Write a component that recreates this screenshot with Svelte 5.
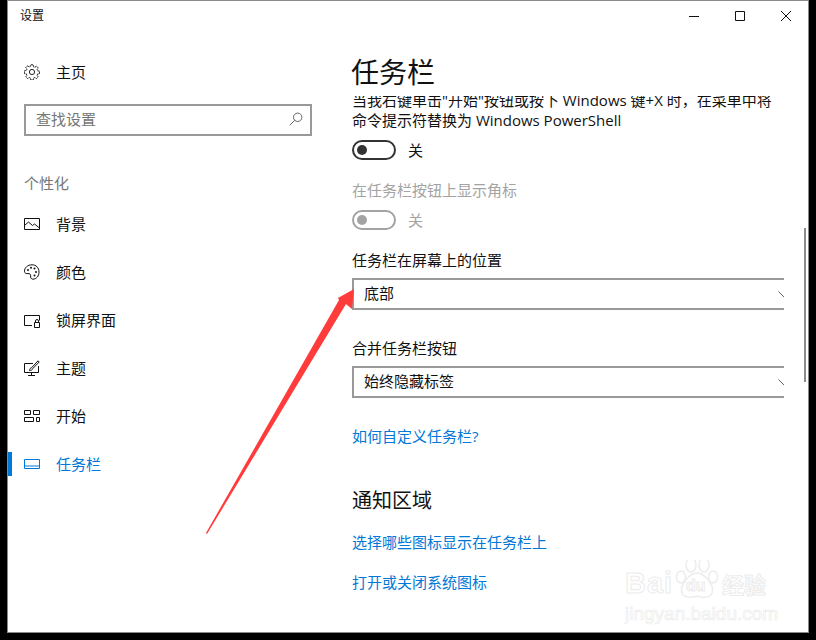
<script>
  const nav = [
    { label: '背景', icon: 'bg' },
    { label: '颜色', icon: 'color' },
    { label: '锁屏界面', icon: 'lock' },
    { label: '主题', icon: 'theme' },
    { label: '开始', icon: 'start' },
    { label: '任务栏', icon: 'bar', active: true }
  ];
</script>

{#snippet chevron()}
  <svg class="chev" width="12" height="7" viewBox="0 0 12 7"><path d="M.5.5 6 6l5.500-5.500" fill="none" stroke="#666" stroke-width="1"/></svg>
{/snippet}

<div class="window">
  <aside class="side">
    <div class="apptitle">设置</div>
    <div class="row home">
      <svg class="ico" width="16" height="16" viewBox="0 0 16 16" fill="none" stroke="#222" stroke-width="1">
        <circle cx="8" cy="8" r="2.600"/>
        <path d="M6.800.8h2.400l.4 2 1.200.5 1.700-1.100 1.700 1.700-1.100 1.700.5 1.200 2 .4v2.400l-2 .4-.5 1.200 1.100 1.700-1.700 1.700-1.700-1.100-1.200.5-.4 2H6.800l-.4-2-1.200-.5-1.700 1.100-1.700-1.700 1.100-1.700-.5-1.200-2-.4V6.800l2-.4.5-1.200-1.100-1.700 1.700-1.700 1.700 1.100 1.200-.5z" stroke-dasharray="2.200 .5"/>
      </svg>
      <span>主页</span>
    </div>
    <div class="search">
      <span>查找设置</span>
      <svg width="14" height="14" viewBox="0 0 14 14" fill="none" stroke="#666" stroke-width="1"><circle cx="8.700" cy="5.300" r="4.200"/><path d="M5.700 8.300.7 13.300"/></svg>
    </div>
    <div class="group">个性化</div>
    <nav>
      {#each nav as item}
        <div class="row item" class:active={item.active}>
          <svg class="ico" width="16" height="16" viewBox="0 0 16 16" fill="none" stroke="currentColor" stroke-width="1">
            {#if item.icon === 'bg'}
              <path d="M.5 2.500h15v11H.5z"/><path d="M.5 9.500 4.500 6l4 3.500 2-1.500 5 4"/>
            {:else if item.icon === 'color'}
              <path d="M8 .8C3.500.8.5 3.800.5 7.200c0 2.200 1.800 2.600 3.500 2.400 1.800-.2 2.800.6 2.600 2.200-.2 1.800.6 3.400 2.200 3.400 3.600 0 6.200-3.200 6.200-7C15 3.600 12 .8 8 .8z"/>
              <g fill="currentColor" stroke="none"><circle cx="4" cy="6" r="1"/><circle cx="7" cy="3.800" r="1"/><circle cx="10.500" cy="4.500" r="1"/><circle cx="12" cy="8" r="1"/><circle cx="10.500" cy="11.500" r="1"/></g>
            {:else if item.icon === 'lock'}
              <path d="M8 13.500H.5v-10h15v5"/><path d="M10.500 10.500h5v5h-5z"/><path d="M11.500 10.500V9a1.500 1.500 0 0 1 3 0v1.500"/>
            {:else if item.icon === 'theme'}
              <path d="M9 3.500H.5v9h14V6"/><path d="M7.500 12.500v2.500M4 15.500h7"/><path d="M5.500 10.500c.2-1.800 1-2.600 2.200-2.800L14 .8l1.200 1.200-6.500 6.700c-.3 1.200-1.500 1.800-3.200 1.800z" fill="#fff"/>
            {:else if item.icon === 'start'}
              <path d="M.5 2.500h6v4h-6zM9.500 2.500h6v4h-6zM.5 9.500h9v4h-9zM12.500 9.500h3v4h-3z"/>
            {:else}
              <path d="M.5 3.500h15v9H.5zM.5 10h15"/>
            {/if}
          </svg>
          <span>{item.label}</span>
        </div>
      {/each}
    </nav>
  </aside>

  <main class="main">
    <div class="controls">
      <svg width="10" height="10" viewBox="0 0 10 10"><path d="M0 5.500h10" stroke="#111"/></svg>
      <svg width="10" height="10" viewBox="0 0 10 10"><path d="M.5.500h9v9h-9z" fill="none" stroke="#111"/></svg>
      <svg width="10" height="10" viewBox="0 0 10 10"><path d="m0 0 10 10M10 0 0 10" stroke="#111"/></svg>
    </div>
    <h1>任务栏</h1>
    <div class="scroll">
      <div class="content">
        <p class="first">当我右键单击"开始"按钮或按下 Windows 键+X 时，在菜单中将<br/>命令提示符替换为 Windows PowerShell</p>
        <div class="toggle-row"><span class="toggle"><i></i></span><span>关</span></div>
        <p class="label dim">在任务栏按钮上显示角标</p>
        <div class="toggle-row off dim"><span class="toggle"><i></i></span><span>关</span></div>
        <p class="label">任务栏在屏幕上的位置</p>
        <div class="select"><span>底部</span>{@render chevron()}</div>
        <p class="label wide">合并任务栏按钮</p>
        <div class="select"><span>始终隐藏标签</span>{@render chevron()}</div>
        <p class="link wide">如何自定义任务栏?</p>
        <h2>通知区域</h2>
        <p class="link l1">选择哪些图标显示在任务栏上</p>
        <p class="link l2">打开或关闭系统图标</p>
      </div>
    </div>
    <div class="thumb"></div>
  </main>
</div>

<svg class="arrow" width="816" height="640" viewBox="0 0 816 640">
  <path d="M354 289 352 309 346 304 207 534 206 533 339 300 338 298z" fill="#ff3b3b"/>
</svg>

<div class="mark">
  <div class="mark-top">
    <span class="bai">Bai</span>
    <span class="paw">
      <svg width="44" height="40" viewBox="0 0 44 40" fill="#fff" stroke="#ececec" stroke-width="1.500">
        <ellipse cx="6" cy="17" rx="4.500" ry="6"/><ellipse cx="16" cy="5" rx="5" ry="7"/><ellipse cx="29" cy="5" rx="5" ry="7"/><ellipse cx="38" cy="17" rx="4.500" ry="6"/>
        <path d="M22 13c7 0 18 12 15 20-2 5-9 5-15 3-6 2-13 2-15-3-3-8 8-20 15-20z"/>
      </svg>
      <span class="du">du</span>
    </span>
    <span class="jy">经验</span>
  </div>
  <div class="mark-url">jingyan.baidu.com</div>
</div>

<style>
  :global(body) {
    margin: 0;
    background: #000;
  }
  :global(#app) {
    height: 640px;
    overflow: hidden;
    position: relative;
  }
  .window {
    box-sizing: border-box;
    width: 802px;
    height: 633px;
    margin-left: 7px;
    background: #fff;
    border: 1px solid #8a8a8a;
    display: flex;
    color: #111;
    font: 15px/20px "Open Sans", "Noto Sans CJK SC", sans-serif;
  }
  .side {
    width: 344px;
    flex: none;
    display: flex;
    flex-direction: column;
    padding-left: 16px;
    box-sizing: border-box;
  }
  .apptitle {
    font-size: 12px;
    line-height: 16px;
    margin: 7px 0 0 -4px;
  }
  .row {
    display: flex;
    align-items: center;
    gap: 16px;
    height: 48px;
  }
  .ico { flex: none; }
  .home { margin-top: 24px; }
  .search {
    box-sizing: border-box;
    width: 288px;
    height: 32px;
    margin-top: 8px;
    border: 2px solid #999;
    display: flex;
    align-items: center;
    justify-content: space-between;
    padding: 0 7px 2px 10px;
    color: #767676;
  }
  .group {
    margin-top: 37px;
    color: #767676;
  }
  nav { margin-top: 7px; margin-left: -16px; }
  .item { padding-left: 16px; position: relative; }
  .active { color: #0078d7; }
  .active::before {
    content: "";
    position: absolute;
    left: 0;
    top: 12px;
    width: 4px;
    height: 24px;
    background: #0078d7;
  }
  .main {
    flex: 1;
    min-width: 0;
    position: relative;
    display: flex;
    flex-direction: column;
  }
  .controls {
    position: absolute;
    top: 10px;
    right: 17px;
    display: flex;
    gap: 36px;
  }
  .controls svg { display: block; }
  h1 {
    margin: 50px 0 0 -1px;
    font-size: 28px;
    line-height: 43px;
    font-weight: 400;
    height: 45px;
    flex: none;
  }
  .scroll {
    width: 432px;
    flex: 1;
    min-height: 0;
    overflow: hidden;
  }
  .content { width: 460px; }
  p { margin: 0; }
  .first { margin-top: -6px; width: 432px; }
  .toggle-row {
    display: flex;
    align-items: center;
    gap: 12px;
    height: 20px;
    margin-top: 10px;
  }
  .toggle {
    box-sizing: border-box;
    width: 44px;
    height: 20px;
    border: 2px solid #333;
    border-radius: 10px;
    display: flex;
    align-items: center;
    padding-left: 3px;
  }
  .toggle i {
    width: 10px;
    height: 10px;
    border-radius: 50%;
    background: #333;
  }
  .dim { color: #a3a3a3; }
  .off { margin-top: 10px; }
  .off .toggle { border-color: #a3a3a3; }
  .off .toggle i { background: #a3a3a3; }
  .label { margin-top: 20px; }
  .select {
    box-sizing: border-box;
    width: 440px;
    height: 32px;
    margin-top: 8px;
    border: 2px solid #999;
    display: flex;
    align-items: center;
    justify-content: space-between;
    padding: 0 0 0 10px;
  }
  .select span { margin-top: -2px; }
  .chev { margin-right: 0; }
  .wide { margin-top: 28px; }
  .link { color: #0078d7; }
  h2 {
    margin: 41px 0 0;
    font-size: 20px;
    line-height: 28px;
    font-weight: 400;
  }
  .l1 { margin-top: 17px; }
  .l2 { margin-top: 20px; }
  .thumb {
    position: absolute;
    left: 452px;
    top: 227px;
    width: 2px;
    height: 154px;
    background: #8c8c8c;
  }
  .arrow {
    position: absolute;
    left: 0;
    top: 0;
    pointer-events: none;
  }
  .mark {
    position: absolute;
    left: 625px;
    top: 560px;
    width: 150px;
    pointer-events: none;
    font-family: "Liberation Sans", sans-serif;
    color: #fff;
    -webkit-text-stroke: 1px #ececec;
  }
  .mark-top { display: flex; align-items: flex-end; height: 40px; }
  .bai { font-size: 29px; line-height: 34px; font-weight: 700; letter-spacing: 1px; width: 50px; }
  .paw { position: relative; width: 46px; height: 40px; flex: none; }
  .paw svg { display: block; }
  .du {
    position: absolute;
    left: 11px;
    top: 17px;
    font-size: 16px;
    line-height: 18px;
    font-weight: 700;
  }
  .jy { font: 700 22px/34px "Noto Sans CJK SC", sans-serif; margin-left: 1px; white-space: nowrap; }
  .mark-url { font-size: 19px; line-height: 22px; margin-top: 3px; white-space: nowrap; -webkit-text-stroke: .7px #ececec; }
</style>
